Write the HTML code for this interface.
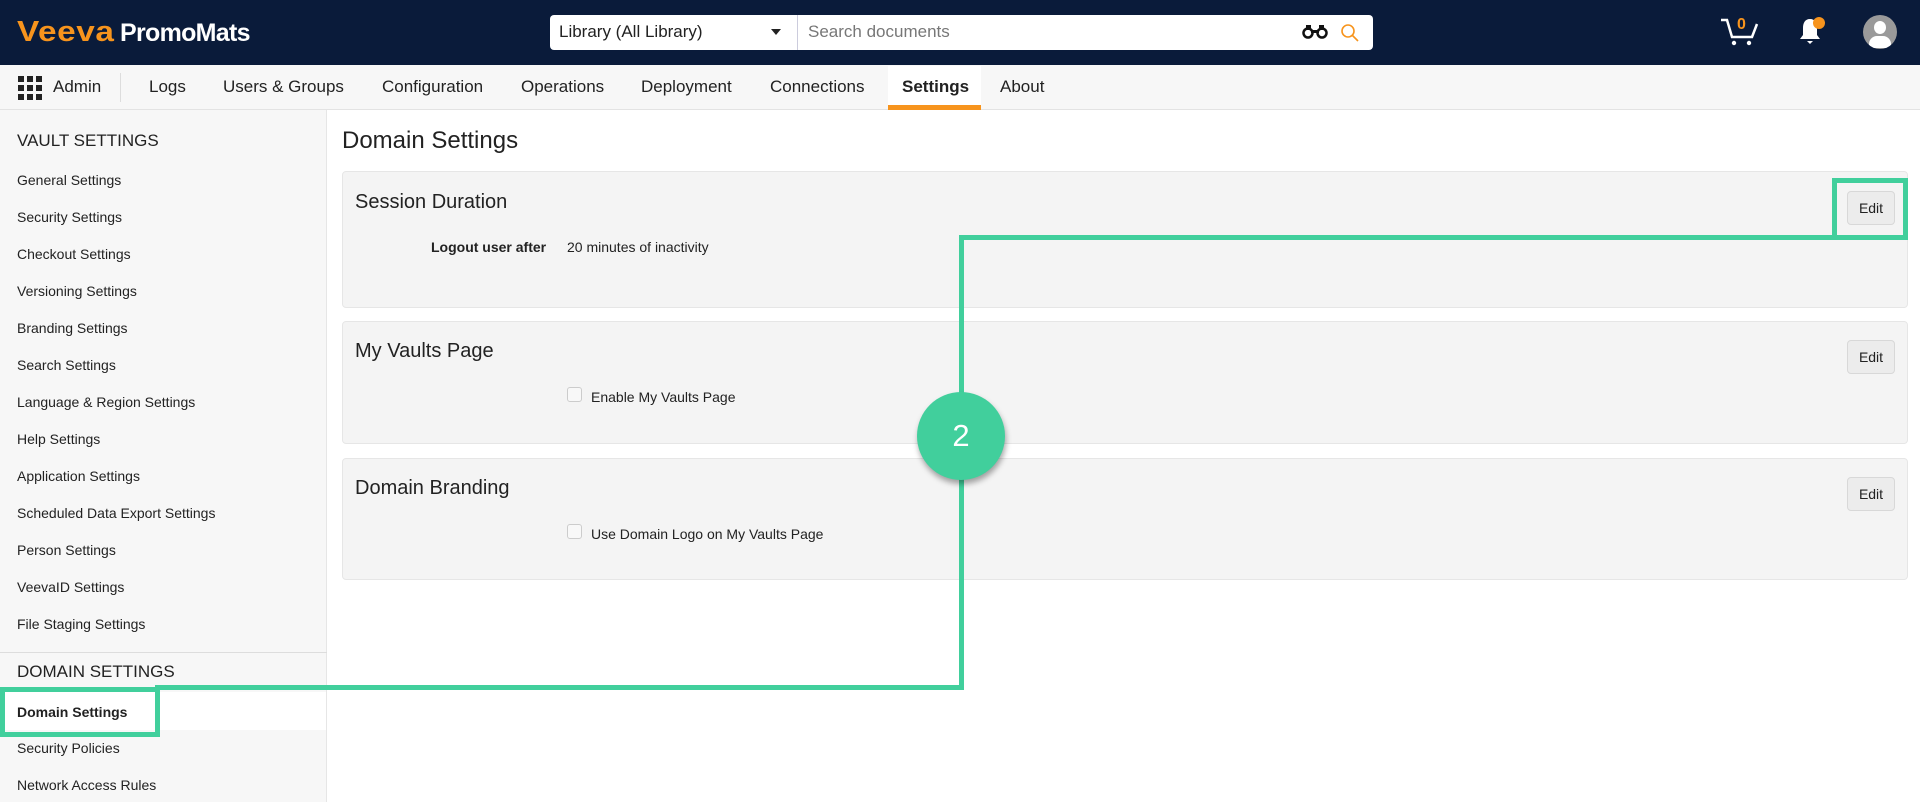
<!DOCTYPE html>
<html><head><meta charset="utf-8"><style>
*{margin:0;padding:0;box-sizing:border-box}
body{width:1920px;height:802px;overflow:hidden;background:#fff;font-family:"Liberation Sans",Arial,sans-serif;color:#1f1f1f;position:relative}
.a{position:absolute;white-space:nowrap}
.top{position:absolute;left:0;top:0;width:1920px;height:65px;background:#0a1b3a}
.nav{position:absolute;left:0;top:65px;width:1920px;height:45px;background:#f7f7f7;border-bottom:1px solid #e3e3e3}
.nv{position:absolute;top:77px;font-size:17px;color:#222}
.side{position:absolute;left:0;top:110px;width:327px;height:692px;background:#f7f7f7;border-right:1px solid #e6e6e6}
.si{position:absolute;left:17px;font-size:14px;color:#222;transform:translateY(-50%)}
.panel{position:absolute;left:342px;width:1566px;background:#f4f4f4;border:1px solid #e6e6e6;border-radius:4px}
.pt{position:absolute;left:12px;font-size:20px;color:#222}
.edit{position:absolute;right:12px;width:48px;height:34px;border:1px solid #d8d8d8;border-radius:4px;background:#ececec;font-size:14px;text-align:center;line-height:32px;color:#222}
.cb{position:absolute;width:15px;height:15px;border:1px solid #ccc;border-radius:3px;background:#f8f8f8}
.g{position:absolute;background:#41cf9c}
</style></head><body>
<div class="top"></div>
<div class="a" style="left:17px;top:16px;font-size:29px;font-weight:bold;color:#f7941d;letter-spacing:0.5px;transform:scaleX(1.15);transform-origin:left top">Veeva</div>
<div class="a" style="left:120px;top:19px;font-size:25px;font-weight:bold;color:#fff;letter-spacing:-0.7px">PromoMats</div>
<div class="a" style="left:550px;top:15px;width:823px;height:35px;background:#fff;border-radius:4px"></div>
<div class="a" style="left:797px;top:15px;width:1px;height:35px;background:#ccd"></div>
<div class="a" style="left:559px;top:22px;font-size:17px;color:#222">Library (All Library)</div>
<div class="a" style="left:771px;top:29px;width:0;height:0;border-left:5px solid transparent;border-right:5px solid transparent;border-top:6px solid #222"></div>
<div class="a" style="left:808px;top:22px;font-size:17px;color:#777">Search documents</div>
<svg class="a" style="left:1302px;top:23px" width="26" height="16" viewBox="0 0 26 16"><circle cx="6" cy="10" r="4.5" fill="none" stroke="#111" stroke-width="2.5"/><circle cx="20" cy="10" r="4.5" fill="none" stroke="#111" stroke-width="2.5"/><rect x="4" y="2" width="5" height="5" fill="#111"/><rect x="17" y="2" width="5" height="5" fill="#111"/><rect x="9" y="7" width="8" height="3" fill="#111"/></svg>
<svg class="a" style="left:1339px;top:22px" width="22" height="22" viewBox="0 0 22 22"><circle cx="9" cy="9" r="6" fill="none" stroke="#f7941d" stroke-width="1.6"/><line x1="13" y1="13" x2="19" y2="19" stroke="#f7941d" stroke-width="1.6"/></svg>
<svg class="a" style="left:1720px;top:16px" width="40" height="30" viewBox="0 0 40 30"><path d="M1 4h6l5 17h20l5-13" fill="none" stroke="#fff" stroke-width="2.5"/><circle cx="14" cy="27" r="2.2" fill="#fff"/><circle cx="29" cy="27" r="2.2" fill="#fff"/></svg>
<div class="a" style="left:1737px;top:16px;font-size:16px;font-weight:bold;color:#f7941d">0</div>
<svg class="a" style="left:1797px;top:16px" width="28" height="32" viewBox="0 0 28 32"><path d="M13 3c-5 0-7 4-7 9v7l-3 4h20l-3-4v-7c0-5-2-9-7-9z" fill="#fff"/><path d="M10 25h6l-3 3z" fill="#fff"/><circle cx="22" cy="7" r="6" fill="#f7941d"/></svg>
<div class="a" style="left:1863px;top:15px;width:34px;height:34px;border-radius:50%;background:#9a9a9a;overflow:hidden"><div class="a" style="left:11px;top:6px;width:12px;height:13px;border-radius:50%;background:#fff"></div><div class="a" style="left:6px;top:21px;width:22px;height:12px;border-radius:8px 8px 2px 2px;background:#fff"></div></div>

<div class="nav"></div>
<svg class="a" style="left:18px;top:76px" width="25" height="25" viewBox="0 0 25 25" fill="#222"><rect x="0" y="0" width="6" height="6"/><rect x="9" y="0" width="6" height="6"/><rect x="18" y="0" width="6" height="6"/><rect x="0" y="9" width="6" height="6"/><rect x="9" y="9" width="6" height="6"/><rect x="18" y="9" width="6" height="6"/><rect x="0" y="18" width="6" height="6"/><rect x="9" y="18" width="6" height="6"/><rect x="18" y="18" width="6" height="6"/></svg>
<div class="nv" style="left:53px">Admin</div>
<div class="a" style="left:120px;top:73px;width:1px;height:29px;background:#ddd"></div>
<div class="nv" style="left:149px">Logs</div>
<div class="nv" style="left:223px">Users &amp; Groups</div>
<div class="nv" style="left:382px">Configuration</div>
<div class="nv" style="left:521px">Operations</div>
<div class="nv" style="left:641px">Deployment</div>
<div class="nv" style="left:770px">Connections</div>
<div class="a" style="left:888px;top:66px;width:93px;height:44px;background:#fff;border-bottom:5px solid #f7941d"></div>
<div class="nv" style="left:902px;font-weight:bold">Settings</div>
<div class="nv" style="left:1000px">About</div>

<div class="side"></div>
<div class="si" style="top:141px;font-size:17px">VAULT SETTINGS</div>
<div class="si" style="top:180px">General Settings</div>
<div class="si" style="top:217px">Security Settings</div>
<div class="si" style="top:254px">Checkout Settings</div>
<div class="si" style="top:291px">Versioning Settings</div>
<div class="si" style="top:328px">Branding Settings</div>
<div class="si" style="top:365px">Search Settings</div>
<div class="si" style="top:402px">Language &amp; Region Settings</div>
<div class="si" style="top:439px">Help Settings</div>
<div class="si" style="top:476px">Application Settings</div>
<div class="si" style="top:513px">Scheduled Data Export Settings</div>
<div class="si" style="top:550px">Person Settings</div>
<div class="si" style="top:587px">VeevaID Settings</div>
<div class="si" style="top:624px">File Staging Settings</div>
<div class="a" style="left:0;top:652px;width:327px;height:1px;background:#ddd"></div>
<div class="si" style="top:672px;font-size:17px">DOMAIN SETTINGS</div>
<div class="a" style="left:0;top:692px;width:326px;height:38px;background:#fff;border-left:3px solid #f7941d"></div>
<div class="si" style="top:712px;font-weight:bold">Domain Settings</div>
<div class="si" style="top:748px">Security Policies</div>
<div class="si" style="top:785px">Network Access Rules</div>

<div class="a" style="left:342px;top:127px;font-size:24px;color:#222">Domain Settings</div>
<div class="panel" style="top:171px;height:137px"><div class="pt" style="top:19px">Session Duration</div><div class="edit" style="top:19px">Edit</div></div>
<div class="a" style="left:431px;top:239px;font-size:14px;font-weight:bold;color:#222">Logout user after</div>
<div class="a" style="left:567px;top:239px;font-size:14px;color:#222">20 minutes of inactivity</div>
<div class="panel" style="top:321px;height:123px"><div class="pt" style="top:18px">My Vaults Page</div><div class="edit" style="top:18px">Edit</div></div>
<div class="cb" style="left:567px;top:387px"></div>
<div class="a" style="left:591px;top:389px;font-size:14px;color:#222">Enable My Vaults Page</div>
<div class="panel" style="top:458px;height:122px"><div class="pt" style="top:18px">Domain Branding</div><div class="edit" style="top:18px">Edit</div></div>
<div class="cb" style="left:567px;top:524px"></div>
<div class="a" style="left:591px;top:526px;font-size:14px;color:#222">Use Domain Logo on My Vaults Page</div>

<div class="a" style="left:1832px;top:178px;width:76px;height:62px;border:5px solid #41cf9c"></div>
<div class="g" style="left:959px;top:235px;width:875px;height:5px"></div>
<div class="g" style="left:959px;top:235px;width:5px;height:455px"></div>
<div class="g" style="left:155px;top:685px;width:809px;height:5px"></div>
<div class="a" style="left:0;top:687px;width:160px;height:50px;border:5px solid #41cf9c"></div>
<div class="a" style="left:917px;top:392px;width:88px;height:88px;border-radius:50%;background:#41cf9c;box-shadow:1px 4px 6px rgba(0,0,0,.35);color:#fff;font-size:31px;text-align:center;line-height:88px">2</div>
</body></html>
